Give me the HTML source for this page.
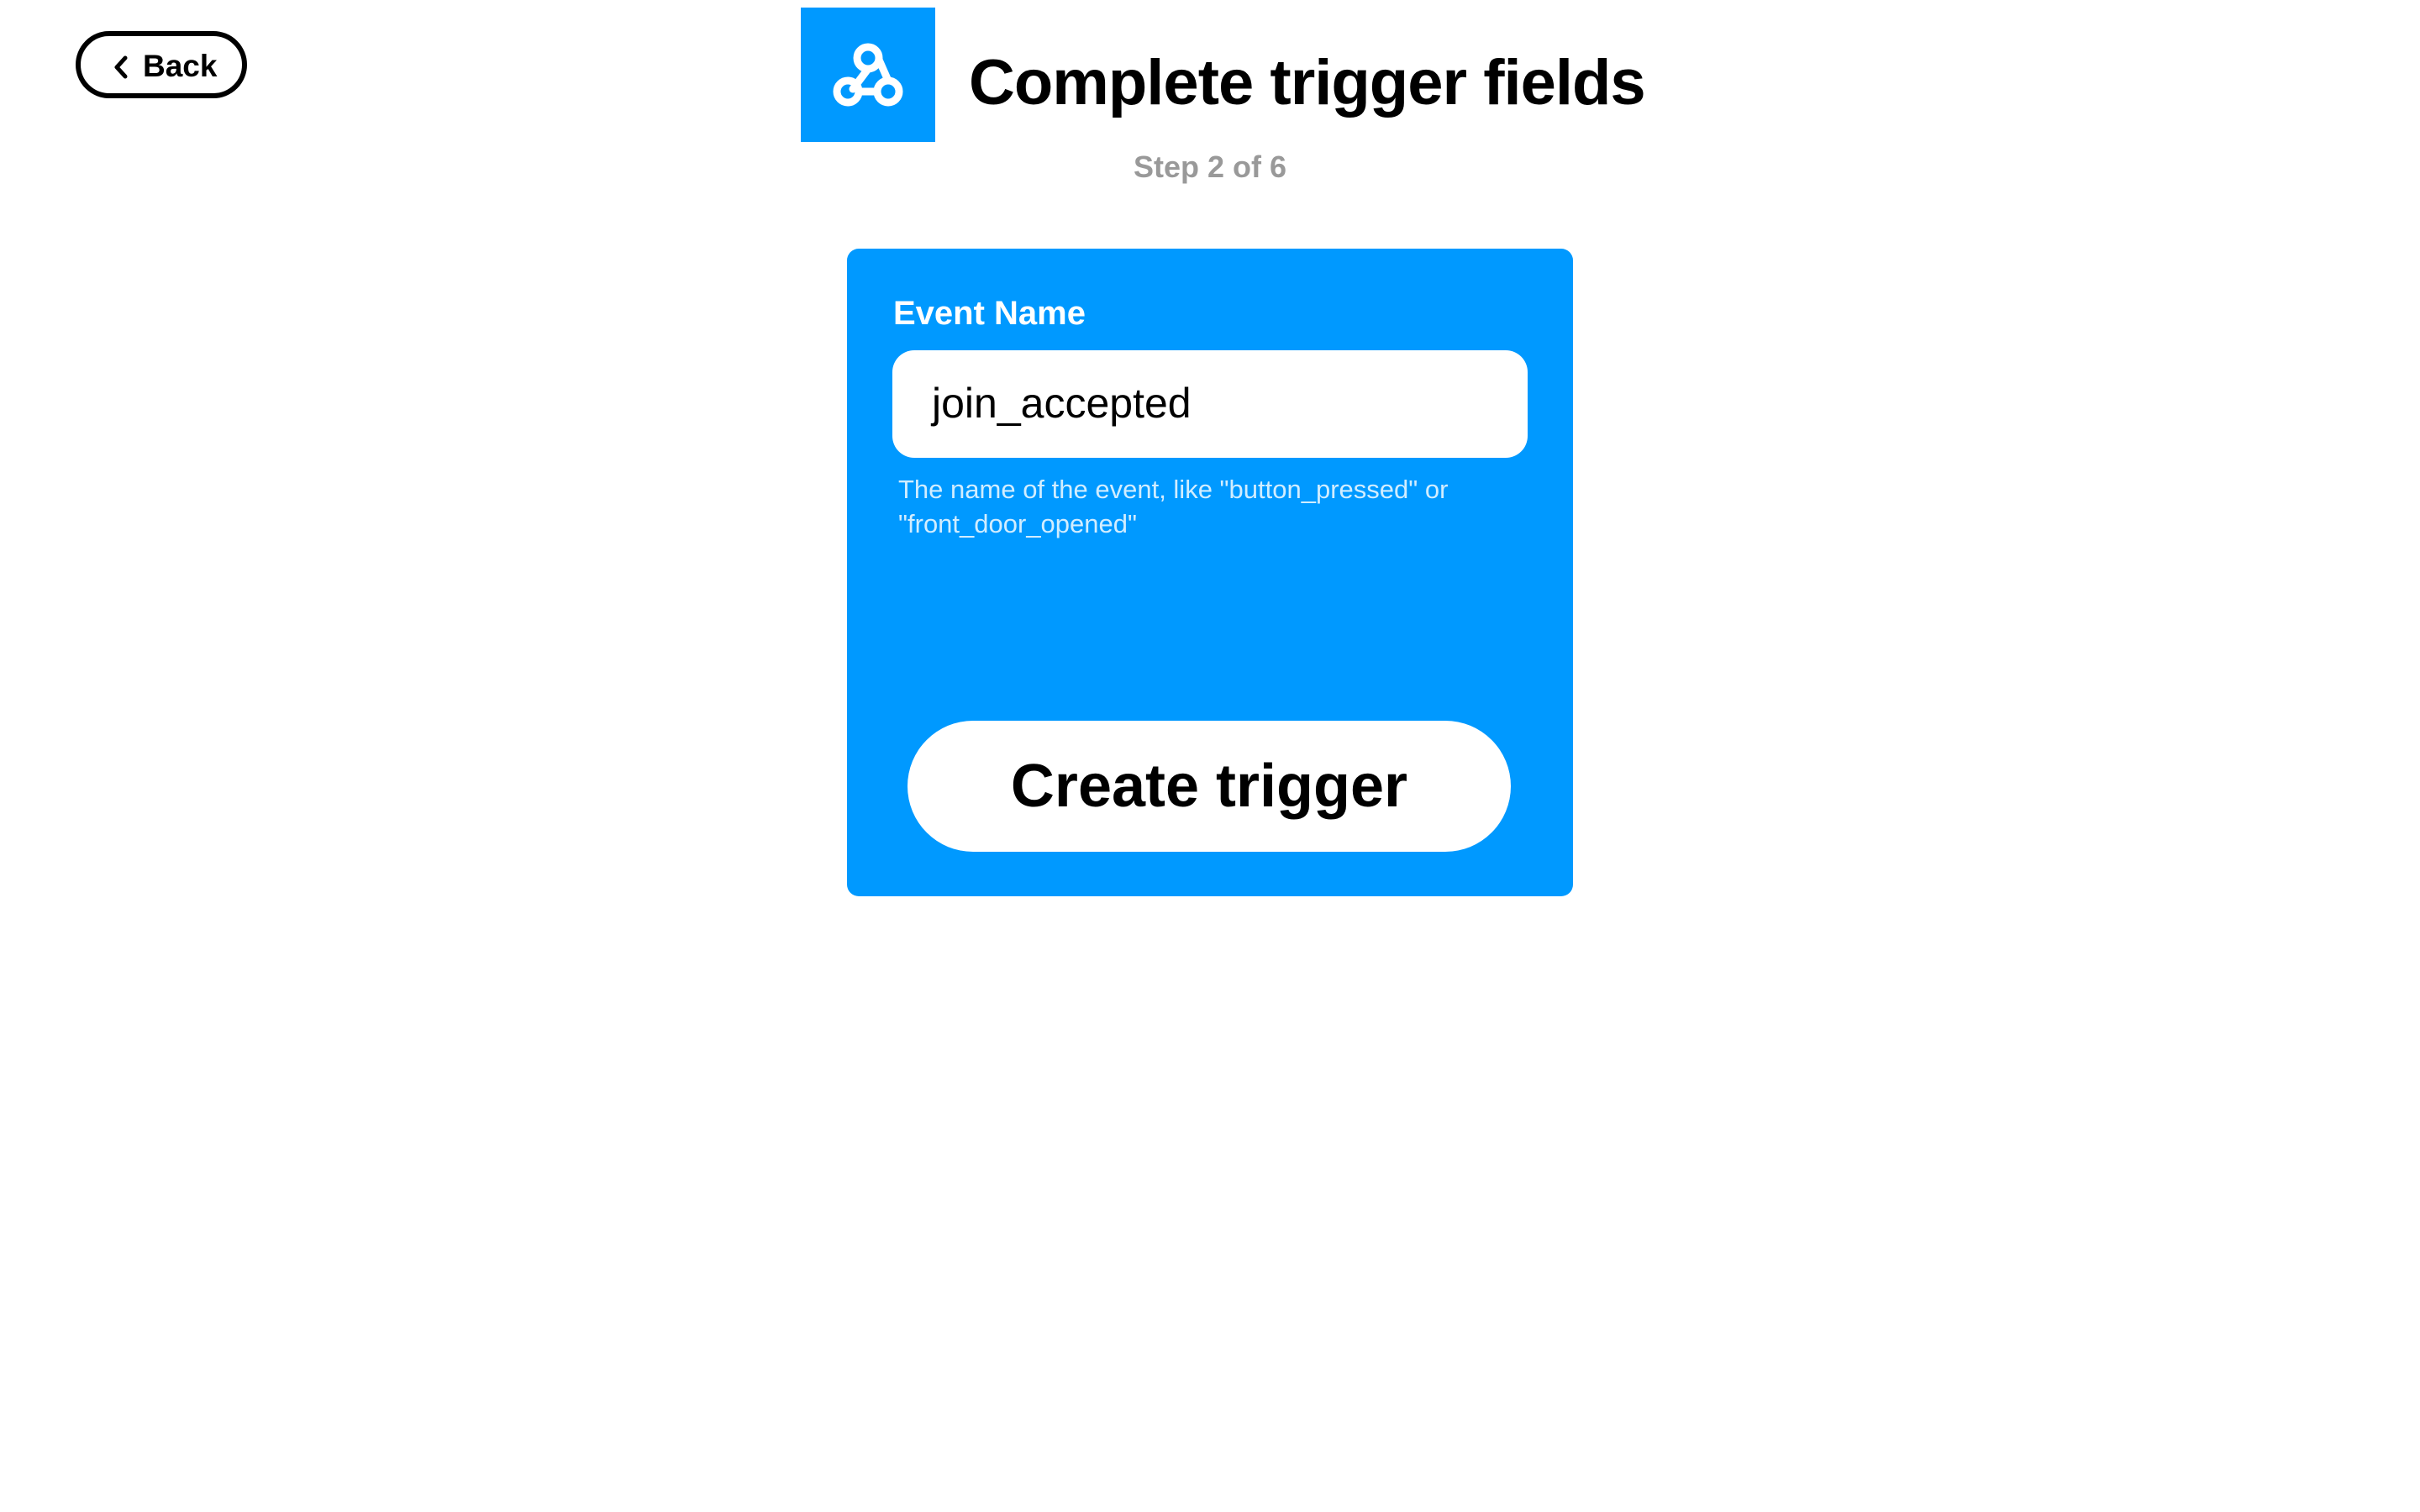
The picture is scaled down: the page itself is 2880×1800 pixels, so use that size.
<!DOCTYPE html>
<html><head><meta charset="utf-8"><style>
*{margin:0;padding:0;box-sizing:border-box}
body{width:2880px;height:1800px;background:#fff;font-family:"Liberation Sans",sans-serif;position:relative;overflow:hidden}
.back{position:absolute;left:90px;top:37px;width:204px;height:80px;border:6px solid #000;border-radius:40px;font-weight:bold;font-size:37px;color:#000}
.back span{position:absolute;left:74px;top:15px}
.back svg{position:absolute;left:36px;top:22px}
.icon{position:absolute;left:953px;top:9px;width:160px;height:160px;background:#0099ff}
.title{position:absolute;left:1153px;top:55px;font-size:76px;font-weight:bold;color:#000;white-space:nowrap;letter-spacing:-1px}
.step{position:absolute;left:0;width:2880px;text-align:center;top:178px;font-size:36px;color:#999;font-weight:bold}
.card{position:absolute;left:1008px;top:296px;width:864px;height:771px;background:#0099ff;border-radius:14px}
.label{position:absolute;left:55px;top:55px;font-size:40px;font-weight:bold;color:#fff}
.input{position:absolute;left:54px;top:121px;width:756px;height:128px;background:#fff;border-radius:26px}
.input span{position:absolute;left:47px;top:34px;font-size:50px;color:#000}
.help{position:absolute;left:61px;top:266px;width:740px;font-size:31px;line-height:41px;color:rgba(255,255,255,.82)}
.btn{position:absolute;left:72px;top:562px;width:718px;height:156px;background:#fff;border-radius:78px;text-align:center;line-height:156px;font-size:72px;font-weight:bold;color:#000}
</style></head><body>
<div class="back"><svg width="24" height="30" viewBox="0 0 24 30"><path d="M17 4 L7 15 L17 26" stroke="#000" stroke-width="5" fill="none" stroke-linecap="round" stroke-linejoin="round"/></svg><span>Back</span></div>
<div class="icon"><svg width="160" height="160" viewBox="0 0 160 160"><g fill="none" stroke="#fff" stroke-width="9" stroke-linecap="round"><circle cx="80" cy="60" r="13"/><circle cx="56" cy="100" r="13"/><circle cx="104" cy="100" r="13"/><path d="M80 73 L62 97"/><path d="M93 62 L104 87"/><path d="M69 100 L91 100"/></g></svg></div>
<div class="title">Complete trigger fields</div>
<div class="step">Step 2 of 6</div>
<div class="card">
<div class="label">Event Name</div>
<div class="input"><span>join_accepted</span></div>
<div class="help">The name of the event, like "button_pressed" or "front_door_opened"</div>
<div class="btn">Create trigger</div>
</div>
</body></html>
